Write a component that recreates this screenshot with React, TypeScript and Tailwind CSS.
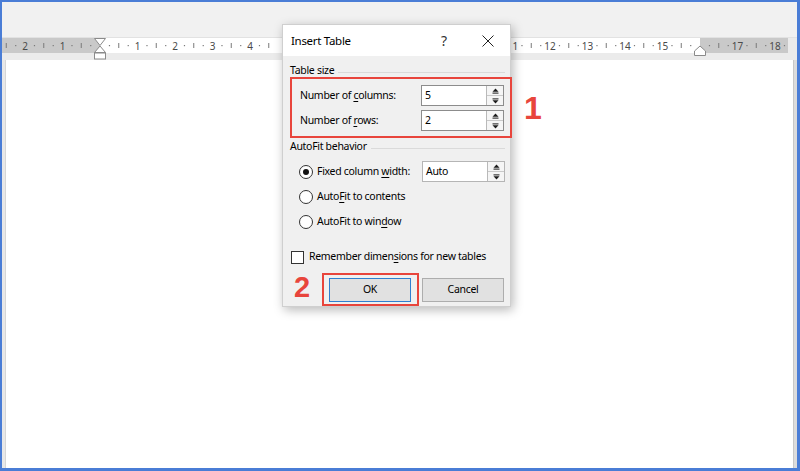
import React from 'react'

const UNIT = 37.5
const ZERO = 98

function Ruler() {
  const marks: React.ReactNode[] = []
  for (let q = -11; q <= 75; q++) {
    const v = q / 4
    const x = ZERO + v * UNIT
    if (x < 2 || x > 790) continue
    // the part under the dialog is hidden anyway
    if (x > 276 && x < 508) continue
    if (q % 4 === 0) {
      if (v === 0 || v === 16) continue
      marks.push(
        <text key={q} x={x} y={11.5} textAnchor="middle" fontSize={10} fill="#4a4a4a" fontFamily="Noto Sans, sans-serif">
          {Math.abs(v)}
        </text>
      )
    } else if (q % 2 === 0) {
      marks.push(<line key={q} x1={x} x2={x} y1={5} y2={10} stroke="#7a7a7a" strokeWidth={1} />)
    } else {
      marks.push(<rect key={q} x={x - 0.5} y={7} width={1.2} height={1.2} fill="#7a7a7a" />)
    }
  }
  return (
    <svg width="795" height="22" className="block">
      <rect x="0" y="0" width="795" height="22" fill="#ebebeb" />
      <rect x="0" y="0" width="98" height="15" fill="#c9c9c9" />
      <rect x="98" y="0" width="600" height="15" fill="#ffffff" />
      <rect x="698" y="0" width="88" height="15" fill="#c9c9c9" />
      {marks}
      {/* indent markers */}
      <path d="M92.5 0.5 H103.5 L98 7.5 Z" fill="#fff" stroke="#8a8a8a" />
      <path d="M98 8 L103.5 14.5 H92.5 Z" fill="#fff" stroke="#8a8a8a" />
      <rect x="92.5" y="15" width="11" height="6" fill="#fff" stroke="#8a8a8a" />
      <path d="M698 8 L703.5 13 V17.5 H692.5 V13 Z" fill="#fff" stroke="#8a8a8a" />
    </svg>
  )
}

function Spinner() {
  return (
    <div className="flex flex-col w-[17px] border-l border-[#b9b9b9] bg-[#f5f5f5]">
      <div className="flex-1 flex items-center justify-center border-b border-[#c9c9c9]">
        <svg width="7" height="6" viewBox="0 0 7 6">
          <path d="M3.5 0.5 L6.5 3.8 H0.5 Z" fill="#1a1a1a" />
          <rect x="0.5" y="4.6" width="6" height="1" fill="#1a1a1a" />
        </svg>
      </div>
      <div className="flex-1 flex items-center justify-center">
        <svg width="7" height="6" viewBox="0 0 7 6">
          <rect x="0.5" y="0.4" width="6" height="1" fill="#1a1a1a" />
          <path d="M0.5 2.2 H6.5 L3.5 5.5 Z" fill="#1a1a1a" />
        </svg>
      </div>
    </div>
  )
}

function NumberBox({ value, border = 'border-[#8c8c8c]' }: { value: string; border?: string }) {
  return (
    <div className={`flex h-[21px] w-[83px] border ${border} bg-white`}>
      <div className="flex-1 flex items-center pl-[3px]">{value}</div>
      <Spinner />
    </div>
  )
}

function GroupHeader({ label }: { label: string }) {
  return (
    <div className="flex items-center h-[16px] gap-[4px]">
      <span className="whitespace-nowrap">{label}</span>
      <div className="flex-1 h-px bg-[#dadada] mt-[2px]" />
    </div>
  )
}

function Radio({ checked }: { checked?: boolean }) {
  return (
    <div className="w-[14px] h-[14px] rounded-full border border-[#333] bg-white flex items-center justify-center shrink-0">
      {checked && <div className="w-[6px] h-[6px] rounded-full bg-[#111]" />}
    </div>
  )
}

function InsertTableDialog() {
  return (
    <div className="absolute left-[280px] top-[22px] w-[229px] h-[283px] bg-[#f0f0f0] border border-[#cfcfcf] shadow-[2px_3px_10px_rgba(0,0,0,0.28)] font-['Noto_Sans',sans-serif] text-black text-[10.5px] tracking-[-0.3px]">
      {/* title bar */}
      <div className="flex items-center h-[31px] bg-white">
        <span className="pl-[8px] text-[11.5px] flex-1">Insert Table</span>
        <span className="w-[44px] text-center text-[14px] text-[#333]">?</span>
        <div className="w-[44px] flex items-center justify-center">
          <svg width="12" height="12" viewBox="0 0 12 12">
            <path d="M0.5 0.5 L11.5 11.5 M11.5 0.5 L0.5 11.5" stroke="#222" strokeWidth="1" />
          </svg>
        </div>
      </div>

      {/* body */}
      <div className="pl-[7px] pr-[5px] pt-[7px]">
        <GroupHeader label="Table size" />
        <div className="flex flex-col gap-[4px] mt-[6px] pl-[10px]">
          <div className="flex items-center h-[21px]">
            <span className="w-[121px]">Number of <u className="underline-offset-2">c</u>olumns:</span>
            <NumberBox value="5" />
          </div>
          <div className="flex items-center h-[21px]">
            <span className="w-[121px]">Number of <u className="underline-offset-2">r</u>ows:</span>
            <NumberBox value="2" />
          </div>
        </div>

        <div className="mt-[8px]">
          <GroupHeader label="AutoFit behavior" />
        </div>
        <div className="flex flex-col gap-[4px] mt-[6px] pl-[9px]">
          <div className="flex items-center h-[21px]">
            <Radio checked />
            <span className="ml-[4px] w-[105px]">Fixed column <u className="underline-offset-2">w</u>idth:</span>
            <NumberBox value="Auto" border="border-[#b5b5b5]" />
          </div>
          <div className="flex items-center h-[21px]">
            <Radio />
            <span className="ml-[4px]">Auto<u className="underline-offset-2">F</u>it to contents</span>
          </div>
          <div className="flex items-center h-[21px]">
            <Radio />
            <span className="ml-[4px]">AutoFit to win<u className="underline-offset-2">d</u>ow</span>
          </div>
        </div>

        <div className="flex items-center h-[16px] mt-[17px] pl-[1px]">
          <div className="w-[13px] h-[13px] border border-[#333] bg-white shrink-0" />
          <span className="ml-[5px] whitespace-nowrap">Remember dimen<u className="underline-offset-2">s</u>ions for new tables</span>
        </div>

        <div className="flex justify-end gap-[11px] mt-[13px] pr-[1px]">
          <button className="w-[82px] h-[24px] bg-[#e1e1e1] border-[1.5px] border-[#2f7fd0]">OK</button>
          <button className="w-[82px] h-[24px] bg-[#e1e1e1] border border-[#adadad]">Cancel</button>
        </div>
      </div>

      {/* annotation boxes */}
      <div className="absolute left-[7px] top-[52px] w-[222px] h-[61px] border-2 border-[#e8453c]" />
      <div className="absolute left-[39px] top-[248px] w-[97px] h-[33px] border-2 border-[#e8453c]" />
    </div>
  )
}

export default function App() {
  return (
    <div className="relative w-[800px] h-[471px] overflow-hidden border-l-2 border-t-2 border-r-[3px] border-b-[3px] border-[#4a7dd6] bg-white flex flex-col">
      <div className="h-[36px] bg-[#f1f1f1] border-b border-[#e2e2e2]" />
      <Ruler />
      <div className="flex-1 flex">
        <div className="w-[4px] bg-[#e8e8e8] border-r border-[#d6d6d6]" />
        <div className="flex-1 bg-white" />
        <div className="w-[4px] bg-[#dcdcdc] border-l border-[#c8c8c8]" />
      </div>

      <InsertTableDialog />

      {/* step numbers */}
      <span className="absolute left-[522px] top-[90px] text-[32px] leading-none font-bold text-[#e8453c] font-['Liberation_Sans',sans-serif]">1</span>
      <span className="absolute left-[292px] top-[271px] text-[29px] leading-none font-bold text-[#e8453c] font-['Liberation_Sans',sans-serif]">2</span>
    </div>
  )
}
